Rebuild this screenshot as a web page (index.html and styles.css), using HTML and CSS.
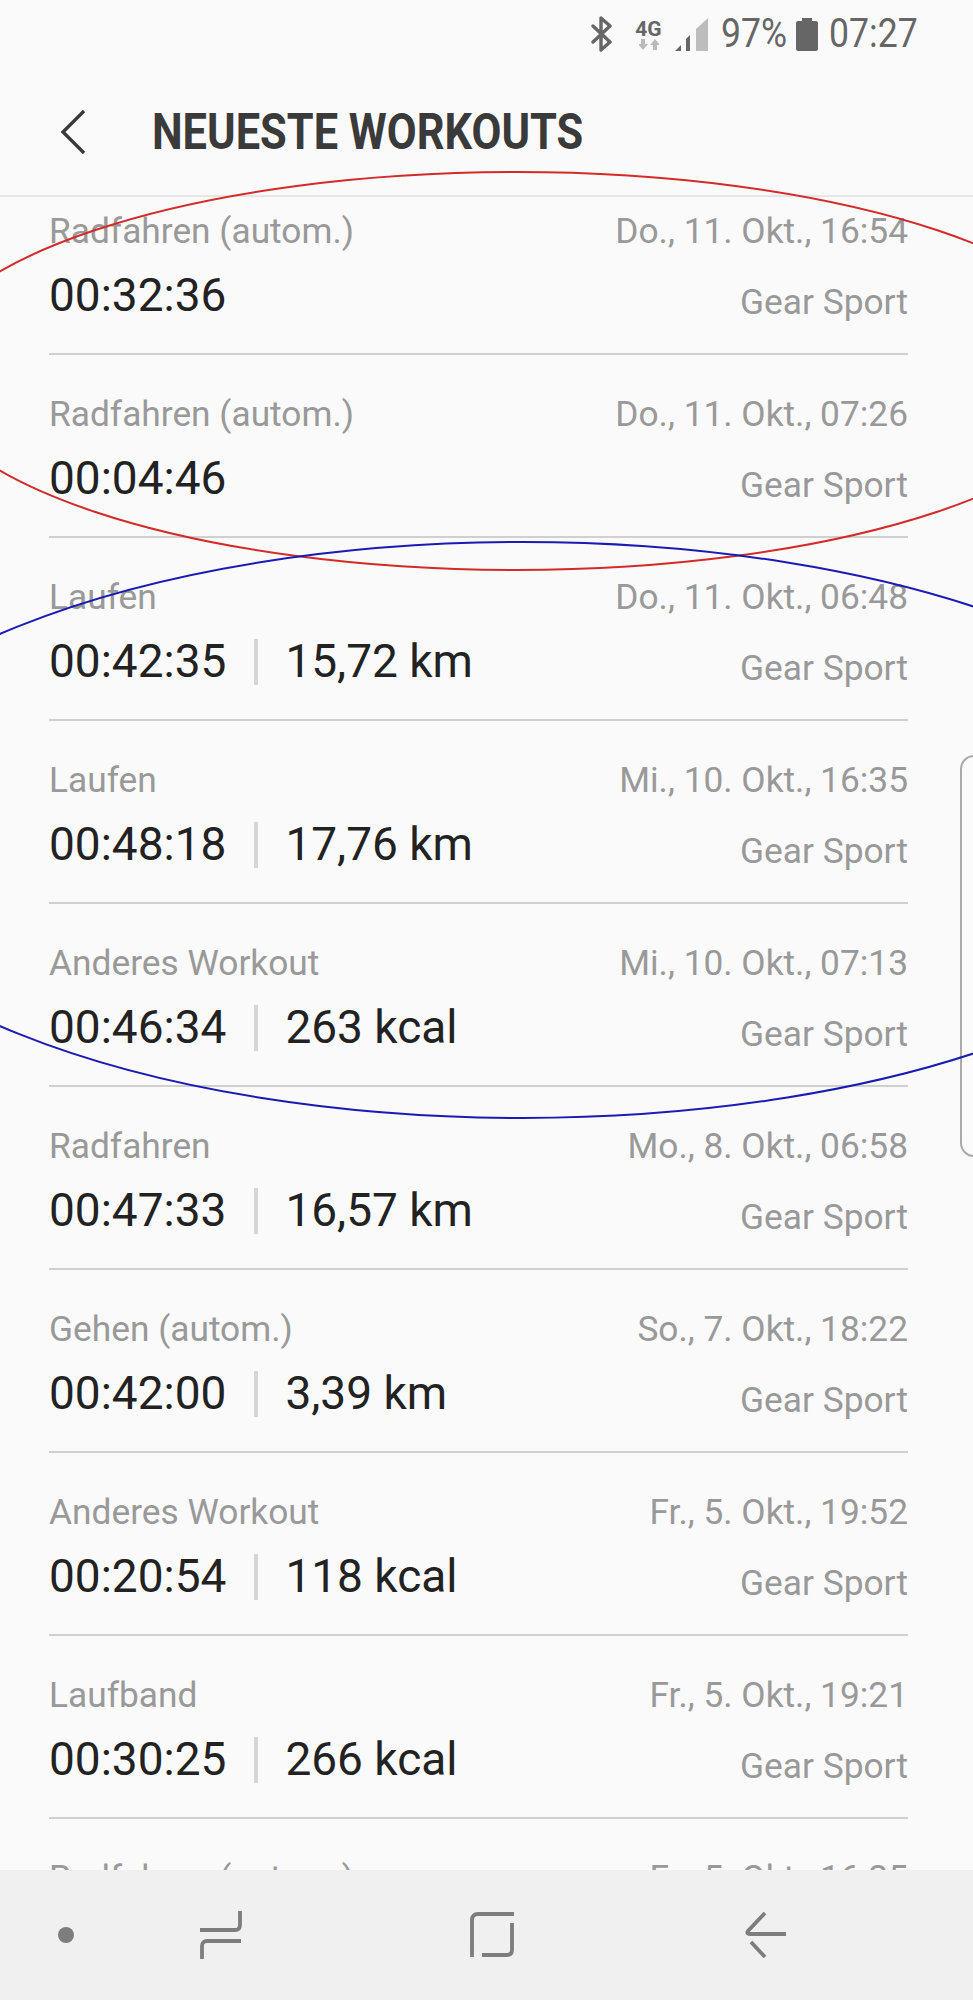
FILE: index.html
```html
<!DOCTYPE html>
<html lang="de">
<head>
    <meta charset="UTF-8">
    <title>Neueste Workouts</title>
    <link rel="stylesheet" href="styles.css">
</head>
<body>
<div class="screen">
    <!-- status bar -->
    <div class="status">
        <svg class="ic-bt" width="22" height="36" viewBox="0 0 22 36"><path d="M2 10 L19 26 L10 34 V2 L19 10 L2 26" fill="none" stroke="#666" stroke-width="3.4" stroke-linejoin="round" stroke-linecap="round"/></svg>
        <div class="net">
            <span class="net-label">4G</span>
            <svg width="20" height="11" viewBox="0 0 20 11"><path d="M2 0h4v5h3l-5 6-5-6h3zM14 11h4V6h3l-5-6-5 6h3z" fill="#bbb"/></svg>
        </div>
        <svg class="ic-signal" width="33" height="33" viewBox="0 0 33 33"><path d="M0 33 L6 27 V33 Z M11 33 V21 L15 17 V33 Z" fill="#666"/><path d="M21 33 V11 L33 0 V33 Z" fill="#bdbdbd"/></svg>
        <span class="status-text pct">97%</span>
        <svg class="ic-batt" width="22" height="33" viewBox="0 0 22 33"><path d="M6 0h10v3h4a2 2 0 0 1 2 2v26a2 2 0 0 1-2 2H2a2 2 0 0 1-2-2V5a2 2 0 0 1 2-2h4z" fill="#666"/></svg>
        <span class="status-text clock">07:27</span>
    </div>

    <header class="head">
        <svg class="back" width="26" height="44" viewBox="0 0 26 44"><path d="M24 1 L3 22 L24 43" fill="none" stroke="#3a3a3a" stroke-width="3.4"/></svg>
        <h1 class="title">NEUESTE WORKOUTS</h1>
    </header>

    <div class="list-wrap">
        <ul class="list">
            <li class="row">
                <div class="line"><span class="sub">Radfahren (autom.)</span><span class="sub">Do., 11. Okt., 16:54</span></div>
                <div class="line"><span class="main"><span class="time">00:32:36</span></span><span class="sub device">Gear Sport</span></div>
            </li>
            <li class="row">
                <div class="line"><span class="sub">Radfahren (autom.)</span><span class="sub">Do., 11. Okt., 07:26</span></div>
                <div class="line"><span class="main"><span class="time">00:04:46</span></span><span class="sub device">Gear Sport</span></div>
            </li>
            <li class="row">
                <div class="line"><span class="sub">Laufen</span><span class="sub">Do., 11. Okt., 06:48</span></div>
                <div class="line"><span class="main"><span class="time">00:42:35</span><i class="sep"></i><span>15,72 km</span></span><span class="sub device">Gear Sport</span></div>
            </li>
            <li class="row">
                <div class="line"><span class="sub">Laufen</span><span class="sub">Mi., 10. Okt., 16:35</span></div>
                <div class="line"><span class="main"><span class="time">00:48:18</span><i class="sep"></i><span>17,76 km</span></span><span class="sub device">Gear Sport</span></div>
            </li>
            <li class="row">
                <div class="line"><span class="sub">Anderes Workout</span><span class="sub">Mi., 10. Okt., 07:13</span></div>
                <div class="line"><span class="main"><span class="time">00:46:34</span><i class="sep"></i><span>263 kcal</span></span><span class="sub device">Gear Sport</span></div>
            </li>
            <li class="row">
                <div class="line"><span class="sub">Radfahren</span><span class="sub">Mo., 8. Okt., 06:58</span></div>
                <div class="line"><span class="main"><span class="time">00:47:33</span><i class="sep"></i><span>16,57 km</span></span><span class="sub device">Gear Sport</span></div>
            </li>
            <li class="row">
                <div class="line"><span class="sub">Gehen (autom.)</span><span class="sub">So., 7. Okt., 18:22</span></div>
                <div class="line"><span class="main"><span class="time">00:42:00</span><i class="sep"></i><span>3,39 km</span></span><span class="sub device">Gear Sport</span></div>
            </li>
            <li class="row">
                <div class="line"><span class="sub">Anderes Workout</span><span class="sub">Fr., 5. Okt., 19:52</span></div>
                <div class="line"><span class="main"><span class="time">00:20:54</span><i class="sep"></i><span>118 kcal</span></span><span class="sub device">Gear Sport</span></div>
            </li>
            <li class="row">
                <div class="line"><span class="sub">Laufband</span><span class="sub">Fr., 5. Okt., 19:21</span></div>
                <div class="line"><span class="main"><span class="time">00:30:25</span><i class="sep"></i><span>266 kcal</span></span><span class="sub device">Gear Sport</span></div>
            </li>
            <li class="row">
                <div class="line"><span class="sub">Radfahren (autom.)</span><span class="sub">Fr., 5. Okt., 16:25</span></div>
            </li>
        </ul>
    </div>

    <nav class="nav">
        <svg width="16" height="16" viewBox="0 0 16 16"><circle cx="8" cy="8" r="8" fill="#7d7d7d"/></svg>
        <svg width="42" height="48" viewBox="0 0 42 48"><path d="M0 19 H35 Q40 19 40 14 V0 M41 30 H7 Q2 30 2 35 V48" fill="none" stroke="#7d7d7d" stroke-width="3.8"/></svg>
        <svg width="44" height="46" viewBox="0 0 44 46"><path d="M44 2 H8 Q2 2 2 8 V45 M42 11 V38 Q42 43 37 43 H12" fill="none" stroke="#7d7d7d" stroke-width="3.8"/></svg>
        <svg width="42" height="46" viewBox="0 0 42 46"><path d="M20 1 L3 19 Q1 22 5 22 H41 M6 30 L20 45" fill="none" stroke="#7d7d7d" stroke-width="3.8"/></svg>
    </nav>

    <!-- edge panel handle -->
    <div class="edge"></div>

    <!-- hand drawn marks on the screenshot -->
    <svg class="marks" width="973" height="2000" viewBox="0 0 973 2000">
        <ellipse cx="516" cy="371" rx="596" ry="199" fill="none" stroke="#d42a2a" stroke-width="2"/>
        <ellipse cx="523" cy="830" rx="714" ry="288" fill="none" stroke="#1a1ab4" stroke-width="2"/>
    </svg>
</div>
</body>
</html>
```

FILE: styles.css
```css
html, body {
    margin: 0;
    padding: 0;
}

body {
    background: #fafafa;
    font-family: 'Roboto', sans-serif;
}

.screen {
    position: relative;
    display: flex;
    flex-direction: column;
    width: 973px;
    height: 2000px;
    overflow: hidden;
}

.status {
    display: flex;
    align-items: center;
    justify-content: flex-end;
    height: 68px;
    padding-right: 57px;
    flex: none;
}

.status-text {
    display: inline-block;
    font-size: 40px;
    line-height: 40px;
    color: #666;
    transform: scaleX(.89);
    white-space: nowrap;
}

.pct {
    width: 62px;
    margin-right: 13px;
    transform-origin: left center;
}

.clock {
    width: 87px;
    margin-left: 11px;
    transform-origin: left center;
}

.ic-bt {
    margin-right: 22px;
}

.net {
    display: flex;
    flex-direction: column;
    align-items: center;
    width: 27px;
    margin-right: 13px;
}

.net-label {
    font-size: 21px;
    line-height: 20px;
    font-weight: 700;
    color: #666;
}

.ic-signal {
    margin-right: 13px;
}

.head {
    display: flex;
    align-items: center;
    height: 127px;
    padding-left: 60px;
    border-bottom: 2px solid #e6e6e6;
    flex: none;
}

.back {
    margin-right: 66px;
}

.title {
    margin: 0;
    font-size: 50px;
    line-height: 60px;
    font-weight: 700;
    color: #3a3a3a;
    white-space: nowrap;
    transform: scaleX(.868);
    transform-origin: left center;
}

.list-wrap {
    flex: 1;
    min-height: 0;
    overflow: hidden;
}

.list {
    list-style: none;
    margin: -25px 0 0;
    padding: 0 65px 0 49px;
}

.row {
    height: 181px;
    padding-top: 0;
    border-bottom: 2px solid #d0d0d0;
}

.line {
    display: flex;
    justify-content: space-between;
    align-items: center;
}

.line:first-child {
    padding-top: 39px;
    height: 40px;
}

.line + .line {
    height: 56px;
    margin-top: 16px;
}

.sub {
    font-size: 35.3px;
    line-height: 40px;
    color: #999;
    white-space: nowrap;
}

.device {
    position: relative;
    top: 7px;
}

.main {
    display: flex;
    align-items: center;
    font-size: 46px;
    line-height: 56px;
    color: #222;
    white-space: nowrap;
}

.sep {
    width: 4px;
    height: 46px;
    margin: 2px 27px 0 28px;
    background: #d6d6d6;
}

.nav {
    display: flex;
    align-items: center;
    gap: 0;
    height: 130px;
    padding-left: 58px;
    background: #f0f0f0;
    flex: none;
    position: relative;
}

.nav svg:nth-child(2) {
    margin-left: 126px;
}

.nav svg:nth-child(3) {
    margin-left: 228px;
}

.nav svg:nth-child(4) {
    margin-left: 231px;
}

.edge {
    position: absolute;
    top: 755px;
    left: 960px;
    width: 30px;
    height: 398px;
    border: 2px solid #aaa;
    border-radius: 14px;
    background: #fbfbfb;
}

.marks {
    position: absolute;
    top: 0;
    left: 0;
    pointer-events: none;
}
```
